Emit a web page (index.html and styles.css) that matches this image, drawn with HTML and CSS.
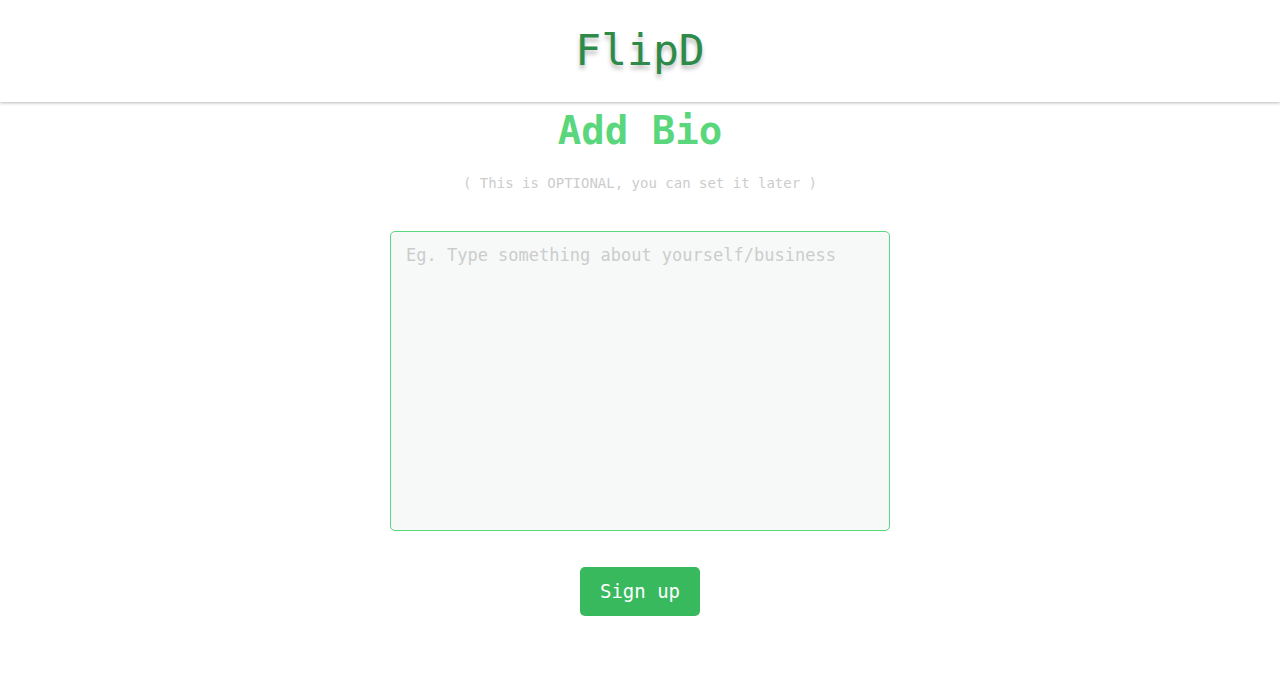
FILE: index.html
```html
<!DOCTYPE html>
<html lang="en">
<head>
  <meta charset="utf-8">
  <meta name="viewport" content="width=device-width, initial-scale=1">
  <title>FlipD</title>
  <link rel="stylesheet" href="styles.css">
</head>
<body>
  <header class="header">
    <span class="logo">FlipD</span>
  </header>
  <main class="main">
    <h1 class="title" id="bio-title">Add Bio</h1>
    <p class="note" id="bio-note">( This is OPTIONAL, you can set it later )</p>
    <form class="form">
      <textarea class="bio" name="bio" aria-labelledby="bio-title" aria-describedby="bio-note" placeholder="Eg. Type something about yourself/business"></textarea>
      <button class="submit" type="submit">Sign up</button>
    </form>
  </main>
</body>
</html>
```

FILE: styles.css
```css
* {
  box-sizing: border-box;
}

body {
  margin: 0;
  background: #fff;
  font-family: "DejaVu Sans Mono", "Liberation Mono", monospace;
}

.header {
  display: flex;
  justify-content: center;
  padding: 24px 16px 26px;
  box-shadow: 0 1px 3px rgba(0, 0, 0, 0.28);
}

.logo {
  color: #2d8a49;
  font-size: 43px;
  line-height: 52px;
  text-shadow: 0 4px 4px rgba(0, 0, 0, 0.25);
}

.main {
  display: flex;
  flex-direction: column;
  align-items: center;
  padding: 0 16px 60px;
}

.title {
  margin: 4px 0 17px;
  color: #5ad67d;
  font-size: 39px;
  font-weight: bold;
  line-height: 50px;
}

.note {
  margin: 0 0 37px;
  color: #ccc;
  font-size: 14px;
  line-height: 21px;
  text-align: center;
}

.form {
  display: flex;
  flex-direction: column;
  align-items: center;
  gap: 36px;
  width: 100%;
}

.bio {
  display: block;
  width: 100%;
  max-width: 500px;
  height: 300px;
  padding: 12px 15px;
  border: 1px solid #5ad67d;
  border-radius: 5px;
  outline: none;
  background: #f6f9f8;
  color: #333;
  font-family: inherit;
  font-size: 17px;
  line-height: 22px;
  resize: none;
}

.bio::placeholder {
  color: #ccc;
  opacity: 1;
}

.submit {
  padding: 12px 20px;
  border: 0;
  border-radius: 5px;
  background: #39b95d;
  color: #fff;
  font-family: inherit;
  font-size: 19px;
  line-height: 25px;
  cursor: pointer;
}
```
